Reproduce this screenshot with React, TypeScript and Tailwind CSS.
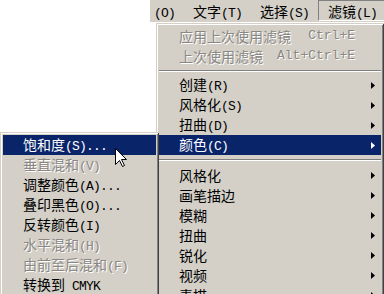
import React from "react";

const CJK = "font-['Noto_Sans_CJK_SC',sans-serif]";
const ASC = "font-['Liberation_Mono',monospace] text-[13px] tracking-[-0.8px]";

function T({ s }: { s: string }) {
  const parts = s.split(/([\x20-\x7E]+)/).filter((p) => p.length > 0);
  return (
    <span className="whitespace-pre">
      {parts.map((p, i) =>
        /^[\x20-\x7E]+$/.test(p) ? (
          <span key={i} className={ASC}>
            {p}
          </span>
        ) : (
          <span key={i} className={CJK + " text-[14px]"}>
            {p}
          </span>
        )
      )}
    </span>
  );
}

function Arrow() {
  return (
    <svg width="4" height="7" viewBox="0 0 4 7" className="ml-auto shrink-0">
      <path d="M0 0 L4 3.5 L0 7 Z" fill="currentColor" />
    </svg>
  );
}

type RowProps = {
  label: string;
  disabled?: boolean;
  hl?: boolean;
  arrow?: boolean;
  shortcut?: string;
};

function Row({ label, disabled, hl, arrow, shortcut }: RowProps) {
  const color = hl
    ? "bg-[#0a246a] text-white"
    : disabled
    ? "text-[#8a8782] [text-shadow:1px_1px_0_#ffffff]"
    : "text-black";
  return (
    <div className={"flex h-[20px] shrink-0 items-center pl-[20px] pr-[6px] leading-[20px] " + color}>
      <T s={label} />
      {shortcut ? (
        <span className="ml-auto mr-[20px] whitespace-pre font-['Liberation_Mono',monospace] text-[13px]">
          {shortcut}
        </span>
      ) : null}
      {arrow ? <Arrow /> : null}
    </div>
  );
}

function Sep({ h }: { h: string }) {
  return (
    <div className={"flex shrink-0 flex-col justify-center " + h}>
      <div className="h-px bg-[#808080]" />
      <div className="h-px bg-white" />
    </div>
  );
}

const frame =
  "shadow-[inset_1px_1px_0_#d4d0c8,inset_-1px_-1px_0_#404040,inset_2px_2px_0_#ffffff,inset_-2px_-2px_0_#808080]";

export default function App() {
  return (
    <div className="relative h-[294px] w-[384px] overflow-hidden bg-white">
      {/* menu bar */}
      <div className="ml-[150px] flex h-[22px] w-[234px] bg-[#d4d0c8] text-black">
        <div className="flex h-[22px] w-[34px] shrink-0 items-center pl-[4px]">
          <T s="(O)" />
        </div>
        <div className="flex h-[22px] w-[67px] shrink-0 items-center pl-[9px]">
          <T s="文字(T)" />
        </div>
        <div className="flex h-[22px] w-[67px] shrink-0 items-center pl-[9px]">
          <T s="选择(S)" />
        </div>
        <div className="flex h-[21px] w-[67px] shrink-0 items-center border-b border-l border-r border-t border-b-white border-l-[#808080] border-r-white border-t-[#808080] pl-[9px] pt-[1px]">
          <T s="滤镜(L)" />
        </div>
      </div>

      {/* main dropdown */}
      <div className={"absolute left-[156px] top-[23px] h-[290px] w-[228px] bg-[#d4d0c8] p-[3px] " + frame}>
        <div className="flex flex-col">
          <Row label="应用上次使用滤镜" disabled shortcut="Ctrl+E" />
          <Row label="上次使用滤镜" disabled shortcut="Alt+Ctrl+E" />
          <Sep h="h-[9px]" />
          <Row label="创建(R)" arrow />
          <Row label="风格化(S)" arrow />
          <Row label="扭曲(D)" arrow />
          <Row label="颜色(C)" arrow hl />
          <Sep h="h-[10px]" />
          <Row label="风格化" arrow />
          <Row label="画笔描边" arrow />
          <Row label="模糊" arrow />
          <Row label="扭曲" arrow />
          <Row label="锐化" arrow />
          <Row label="视频" arrow />
          <Row label="素描" arrow />
        </div>
      </div>

      {/* submenu */}
      <div className={"absolute left-0 top-[132px] h-[180px] w-[159px] bg-[#d4d0c8] p-[3px] " + frame}>
        <div className="flex flex-col">
          <Row label="饱和度(S)..." hl />
          <Row label="垂直混和(V)" disabled />
          <Row label="调整颜色(A)..." />
          <Row label="叠印黑色(O)..." />
          <Row label="反转颜色(I)" />
          <Row label="水平混和(H)" disabled />
          <Row label="由前至后混和(F)" disabled />
          <Row label="转换到 CMYK" />
        </div>
      </div>

      {/* mouse cursor */}
      <svg
        className="absolute left-[115px] top-[148px]"
        width="13"
        height="20"
        viewBox="0 0 13 20"
      >
        <path
          d="M0.5 0.5 L0.5 16.5 L4.5 12.5 L7.5 18.5 L9.5 17.5 L6.5 11.5 L11.5 11.5 Z"
          fill="#ffffff"
          stroke="#000000"
          strokeWidth="1"
          strokeLinejoin="miter"
        />
      </svg>
    </div>
  );
}
